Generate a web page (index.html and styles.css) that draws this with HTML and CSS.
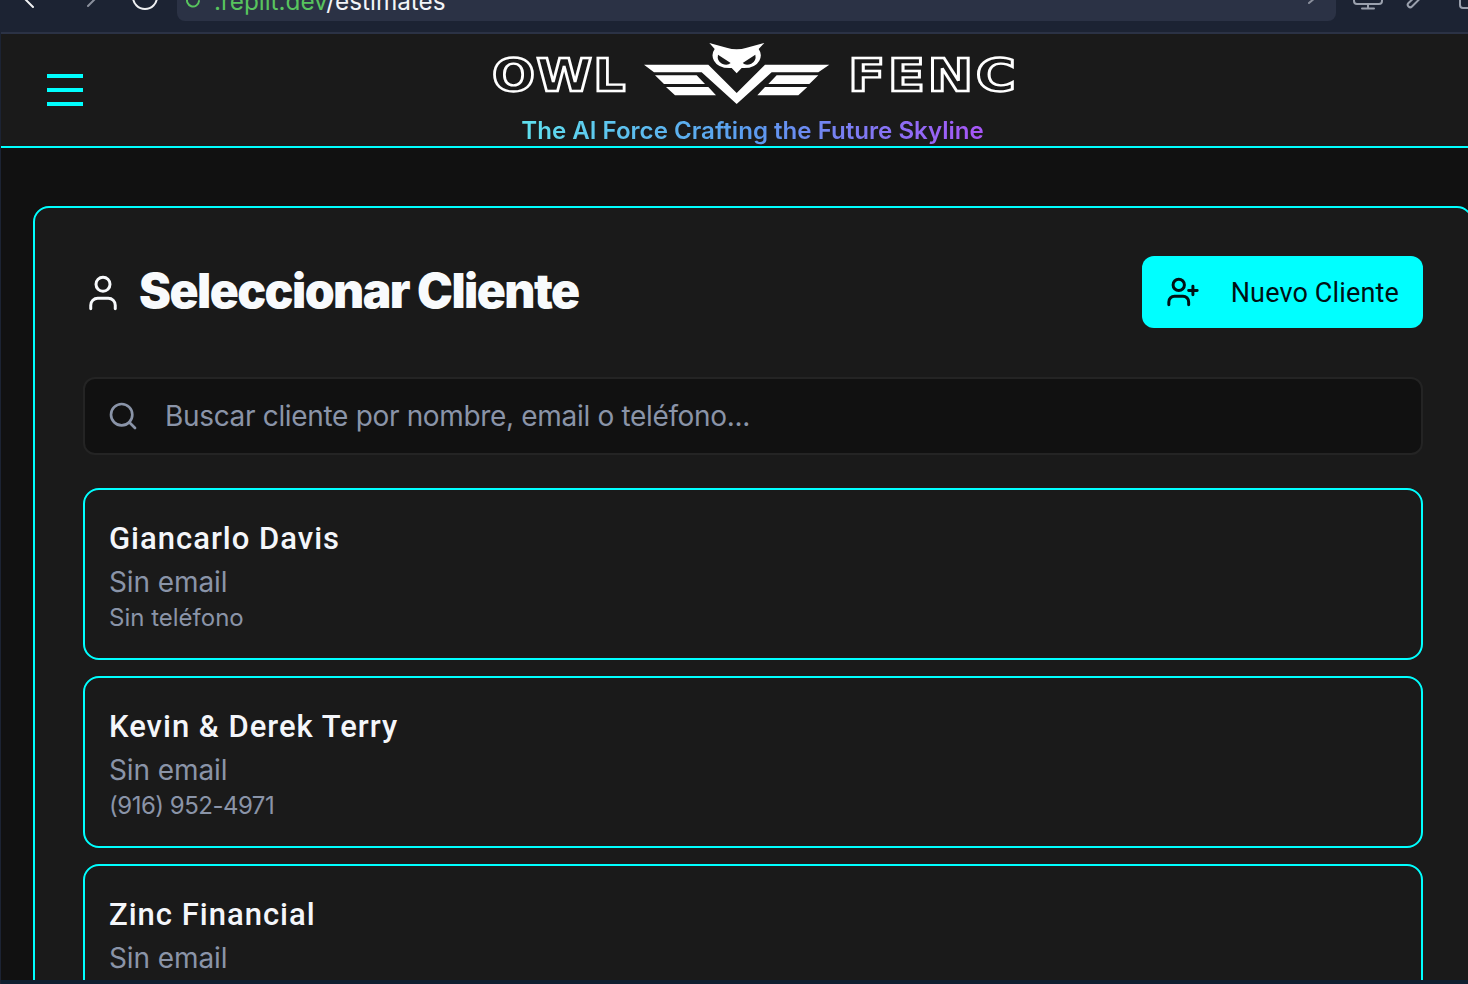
FILE: index.html
```html
<!DOCTYPE html>
<html lang="es">
<head>
    <meta charset="UTF-8">
    <meta name="viewport" content="width=device-width, initial-scale=1.0">
    <title>Seleccionar Cliente</title>
    <link rel="stylesheet" href="styles.css">
</head>
<body>
    <div class="page">
        <div class="topbar">
            <svg class="tb-back" width="20" height="20" viewBox="0 0 20 20"><path d="M13 18 4 9l9-9"/></svg>
            <svg class="tb-forward" width="20" height="20" viewBox="0 0 20 20"><path d="M8 17l9-9-9-9"/></svg>
            <svg class="tb-reload" width="30" height="30" viewBox="0 0 30 30"><circle cx="15" cy="15" r="12"/></svg>
            <div class="urlbar">
                <svg class="url-icon" width="14" height="14" viewBox="0 0 14 14"><path d="M13 8a6 6 0 1 1-2-5"/></svg>
                <span class="url-text"><span class="url-host">.replit.dev</span>/estimates</span>
                <svg class="url-arrow" width="8" height="8" viewBox="0 0 8 8"><path d="M1 7l6-5"/></svg>
            </div>
            <svg class="tb-monitor" width="30" height="20" viewBox="0 0 30 20"><rect x="1" y="-8" width="28" height="23" rx="3"/><path d="M15 15v4.500M9 19.500h12"/></svg>
            <svg class="tb-tool" width="25" height="20" viewBox="0 0 25 20"><path d="M13 5 3.500 14a2.400 2.400 0 0 0 3.500 3.500L16 8.500l7-3"/></svg>
            <svg class="tb-square" width="30" height="20" viewBox="0 0 30 20"><rect x="1" y="-12" width="30" height="31" rx="3"/></svg>
        </div>

        <header class="header">
            <button class="menu-btn" type="button" aria-label="Menu">
                <span></span><span></span><span></span>
            </button>
            <div class="brand">
                <div class="logo">
                    <span class="logo-word logo-owl">OWL</span>
                    <svg class="logo-mark" width="195" height="72" viewBox="0 0 585 216">
                        <path d="M12 80H205L290 165 375 80H568L535 103H395L290 198 185 103H42Z"/>
                        <path d="M45 112H170L195 138H72ZM78 147H205L228 172H105ZM535 112H410L385 138H508ZM502 147H375L352 172H475Z"/>
                        <path d="M208 15 260 29Q290 38 320 29L373 15 356 33Q368 50 358 68 346 90 312 90L305 90 290 106 275 90H268Q234 90 222 68 212 50 224 33Z"/>
                        <path class="logo-eye" d="M234 50Q230 68 246 77 262 84 272 75ZM346 50Q350 68 334 77 318 84 308 75Z"/>
                    </svg>
                    <span class="logo-word logo-fenc">FENC</span>
                </div>
                <div class="tagline">The AI Force Crafting the Future Skyline</div>
            </div>
        </header>

        <main class="main">
            <section class="panel">
                <div class="panel-head">
                    <div class="panel-title">
                        <svg class="icon-user" width="42" height="42" viewBox="0 0 24 24"><path d="M19 21v-2a4 4 0 0 0-4-4H9a4 4 0 0 0-4 4v2"/><circle cx="12" cy="7" r="4"/></svg>
                        <h1>Seleccionar Cliente</h1>
                    </div>
                    <button class="btn-new" type="button">
                        <svg width="34" height="34" viewBox="0 0 24 24"><path d="M16 21v-2a4 4 0 0 0-4-4H6a4 4 0 0 0-4 4v2"/><circle cx="9" cy="7" r="4"/><path d="M19 8v6M22 11h-6"/></svg>
                        <span>Nuevo Cliente</span>
                    </button>
                </div>

                <div class="search">
                    <svg width="32" height="32" viewBox="0 0 24 24"><circle cx="11" cy="11" r="8"/><path d="m21 21-4.300-4.300"/></svg>
                    <input type="text" placeholder="Buscar cliente por nombre, email o teléfono...">
                </div>

                <div class="client-list">
                    <div class="client-card">
                        <div class="client-name">Giancarlo Davis</div>
                        <div class="client-email">Sin email</div>
                        <div class="client-phone">Sin teléfono</div>
                    </div>
                    <div class="client-card">
                        <div class="client-name">Kevin &amp; Derek Terry</div>
                        <div class="client-email">Sin email</div>
                        <div class="client-phone client-number">(916) 952-4971</div>
                    </div>
                    <div class="client-card">
                        <div class="client-name">Zinc Financial</div>
                        <div class="client-email">Sin email</div>
                    </div>
                </div>
            </section>
        </main>

        <div class="bottom-strip"></div>
    </div>
</body>
</html>
```
FILE: styles.css
```css
* {
    box-sizing: border-box;
}
html, body {
    margin: 0;
    padding: 0;
    height: 984px;
    overflow: hidden;
    background-color: #111111;
    font-family: Inter, "Liberation Sans", sans-serif;
}
.page {
    display: flex;
    flex-direction: column;
    height: 984px;
    border-left: 1px solid #1c2333;
    overflow: hidden;
}

/* browser chrome, cut off by the top of the window */
.topbar {
    display: flex;
    align-items: flex-end;
    flex: 0 0 34px;
    padding-left: 19px;
    background-color: #1c2333;
    border-bottom: 2px solid #2b3245;
    overflow: hidden;
}
.topbar svg {
    flex-shrink: 0;
    overflow: visible;
    fill: none;
    stroke-width: 2;
    stroke-linecap: round;
    stroke-linejoin: round;
}
.tb-back {
    margin-bottom: 23px;
    stroke: #f0f1f3;
}
.tb-forward {
    margin: 0 0 23px 40px;
    stroke: #8a8f9c;
}
.tb-reload {
    margin: 0 0 20px 30px;
    stroke: #f0f1f3;
}
.urlbar {
    display: flex;
    align-items: flex-end;
    flex-shrink: 0;
    width: 1159px;
    height: 40px;
    margin: 0 0 11px 17px;
    background-color: #2b3245;
    border-radius: 8px;
    overflow: hidden;
}
.url-icon {
    margin: 0 0 14px 9px;
    stroke: #58c45e;
}
.url-text {
    margin: 0 0 8px 14px;
    color: #f2f4f8;
    font-size: 24.3px;
    line-height: 24px;
    white-space: nowrap;
}
.url-host {
    color: #58c45e;
}
.url-arrow {
    margin: 0 20px 17px auto;
    stroke: #8a8f9c;
}
.tb-monitor,
.tb-tool,
.tb-square {
    margin-bottom: 23px;
    stroke: #9aa0ad;
}
.tb-monitor {
    margin-left: 17px;
}
.tb-tool {
    margin-left: 22px;
}
.tb-square {
    margin-left: 29px;
}

/* header */
.header {
    display: flex;
    align-items: center;
    flex: 0 0 114px;
    padding: 0 46px 0 46px;
    background-color: #1a1a1a;
    border-bottom: 2px solid #00ffff;
}
.menu-btn {
    display: flex;
    flex-direction: column;
    gap: 10px;
    width: 36px;
    padding: 0;
    background: none;
    border: none;
}
.menu-btn span {
    display: block;
    height: 4px;
    background-color: #00ffff;
}
.brand {
    display: flex;
    flex: 1;
    flex-direction: column;
    align-items: center;
    padding-top: 4px;
}
.logo {
    display: flex;
    align-items: center;
    gap: 13px;
    height: 72px;
}
.logo-mark {
    display: block;
    margin-left: 1px;
    fill: #ffffff;
}
.logo-eye {
    fill: #1a1a1a;
}
/* the logo lettering is much wider than any installed font, so it gets stretched */
.logo-word {
    display: block;
    margin-top: 4px;
    color: #1a1a1a;
    font-family: "DejaVu Sans", sans-serif;
    font-size: 44px;
    font-weight: 700;
    line-height: 1;
    -webkit-text-stroke: 2.4px #ffffff;
    transform-origin: left center;
    white-space: nowrap;
}
.logo-owl {
    width: 134px;
    letter-spacing: 1px;
    transform: scaleX(1.15);
}
.logo-fenc {
    width: 166px;
    letter-spacing: 2px;
    transform: scaleX(1.24);
}
.tagline {
    margin-bottom: -6px;
    background: linear-gradient(90deg, #5fe0ee, #5b9bf0 50%, #a855f7);
    -webkit-background-clip: text;
    background-clip: text;
    color: transparent;
    font-size: 24.1px;
    font-weight: 600;
    line-height: 42px;
    white-space: nowrap;
}

/* main panel runs past the right edge of the window */
.main {
    flex: 1;
    min-height: 0;
    padding: 58px 0 0 32px;
    overflow: hidden;
}
.panel {
    width: 1440px;
    min-height: 900px;
    padding: 48px;
    background-color: #1a1a1a;
    border: 2px solid #00ffff;
    border-radius: 16px;
}
.panel-head {
    display: flex;
    align-items: center;
    justify-content: space-between;
    margin-bottom: 49px;
}
.panel-title {
    display: flex;
    align-items: center;
    gap: 15px;
    margin-left: -1px;
}
.icon-user {
    margin-top: 2px;
    fill: none;
    stroke: #f8fafc;
    stroke-width: 1.7;
    stroke-linecap: round;
    stroke-linejoin: round;
}
h1 {
    margin: 0 0 2px;
    color: #f8fafc;
    font-size: 48px;
    font-weight: 900;
    letter-spacing: -1.55px;
    line-height: 56px;
}
.btn-new {
    display: flex;
    align-items: center;
    gap: 31px;
    height: 72px;
    padding: 0 24px;
    background-color: #00ffff;
    border: none;
    border-radius: 12px;
    color: #001014;
    font-family: Roboto, sans-serif;
    font-size: 27px;
    letter-spacing: 0.15px;
}
.btn-new span {
    padding-top: 2px;
}
.btn-new svg {
    fill: none;
    stroke: #001014;
    stroke-width: 2.100;
    stroke-linecap: round;
    stroke-linejoin: round;
}
.search {
    display: flex;
    align-items: center;
    gap: 26px;
    height: 78px;
    padding-left: 22px;
    background-color: #111111;
    border: 2px solid #242424;
    border-radius: 12px;
}
.search svg {
    flex-shrink: 0;
    fill: none;
    stroke: #8a94a8;
    stroke-width: 2;
    stroke-linecap: round;
    stroke-linejoin: round;
}
.search input {
    flex: 1;
    padding: 0;
    background: none;
    border: none;
    color: #8a94a8;
    font-family: Inter, sans-serif;
    font-size: 28px;
    letter-spacing: -0.33px;
}
.search input::placeholder {
    color: #8a94a8;
    opacity: 1;
}
.client-list {
    display: flex;
    flex-direction: column;
    gap: 16px;
    margin-top: 33px;
}
.client-card {
    height: 172px;
    padding: 25px 24px 23px;
    border: 2px solid #00ffff;
    border-radius: 16px;
}
.client-name {
    color: #f4f6fa;
    font-family: Roboto, sans-serif;
    font-size: 31px;
    font-weight: 500;
    letter-spacing: 1px;
    line-height: 48px;
}
.client-email {
    color: #8a94a8;
    font-size: 28px;
    letter-spacing: -0.1px;
    line-height: 38px;
}
.client-phone {
    color: #8a94a8;
    font-size: 24px;
    line-height: 34px;
}
.client-number {
    letter-spacing: -0.5px;
}
.bottom-strip {
    flex: 0 0 4px;
    background-color: #0f1f30;
}
```
